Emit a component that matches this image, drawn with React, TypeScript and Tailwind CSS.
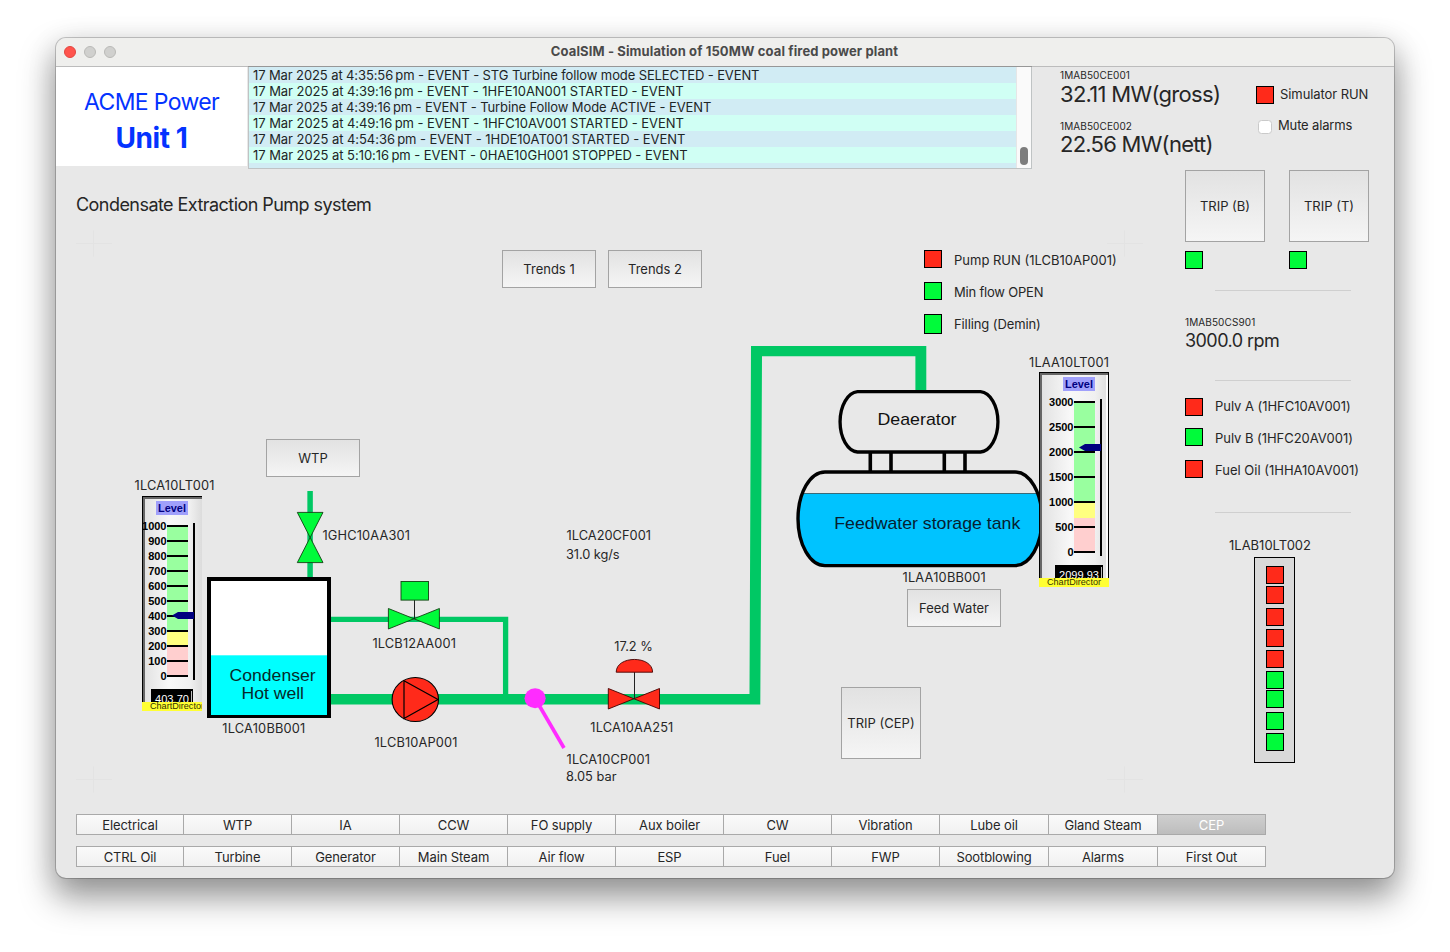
import React from "react";

const RED = "#ff2a1a";
const GREEN = "#00fb3a";
const PIPE = "#00c864";

type Align = "start" | "middle" | "end";

/** Tag or value label on the mimic, fitted to the width w. */
function Tag({ x, y, w, children }: { x: number; y: number; w: number; children: string }) {
  return (
    <text x={x} y={y} textLength={w} fontSize={12.8} fill="#262626">
      {children}
    </text>
  );
}

function Lamp({ on, className = "" }: { on: boolean; className?: string }) {
  return (
    <span
      className={`block size-[18px] shrink-0 border border-black ${on ? "bg-[#ff2a1a]" : "bg-[#00fb3a]"} ${className}`}
    />
  );
}

function PushButton({ label, className }: { label: string; className: string }) {
  return (
    <button
      className={`flex items-center justify-center border border-[#a3a3a3] bg-linear-to-b from-[#e2e2e2] to-[#f5f5f5] pt-0.5 text-[13px] text-[#262626] ${className}`}
    >
      {label}
    </button>
  );
}

function ArialText(props: {
  x: number;
  y: number;
  w?: number;
  size: number;
  bold?: boolean;
  fill?: string;
  anchor?: Align;
  children: React.ReactNode;
}) {
  return (
    <text
      x={props.x}
      y={props.y}
      fontFamily="'Liberation Sans', Arial, sans-serif"
      fontSize={props.size}
      fontWeight={props.bold ? 700 : 400}
      fill={props.fill ?? "#000"}
      textAnchor={props.anchor ?? "start"}
      textLength={props.w}
      lengthAdjust="spacingAndGlyphs"
    >
      {props.children}
    </text>
  );
}

interface GaugeProps {
  id: string;
  x: number;
  y: number;
  width: number;
  inset: number;
  ticks: number[];
  warn: number;
  low: number;
  pointer: number;
  value: string;
  valueX: number;
  valueWidth: number;
  rightEdge?: boolean;
}

function Gauge(g: GaugeProps) {
  const sx = 25 + g.inset;
  const step = 150 / (g.ticks.length - 1);
  return (
    <g transform={`translate(${g.x} ${g.y})`}>
      <defs>
        <linearGradient id={`${g.id}-bg`} x1="0" x2="1" y1="0" y2="0">
          <stop offset="0" stopColor="#e0e0e0" />
          <stop offset="0.45" stopColor="#f8f8f8" />
          <stop offset="0.8" stopColor="#f0f0f0" />
          <stop offset="1" stopColor="#dcdcdc" />
        </linearGradient>
        <clipPath id={`${g.id}-clip`}>
          <rect width={g.width} height="206" />
        </clipPath>
        <clipPath id={`${g.id}-foot`}>
          <rect y="205" width={g.width} height="11" />
        </clipPath>
      </defs>
      <g clipPath={`url(#${g.id}-clip)`}>
        <rect width={g.width} height="206" fill={`url(#${g.id}-bg)`} />
        <path d={`M0 0H${g.width}V3H3V206H0Z`} fill="#666" />
        <path d={`M0 0H${g.width}V1H1V206H0Z`} fill="#000" />
        {g.rightEdge && (
          <>
            <path d={`M${g.width - 3} 3h2v203h-2z`} fill="#fcfcfc" />
            <path d={`M${g.width - 1} 0h1v206h-1z`} fill="#000" />
          </>
        )}
        <rect x={14 + g.inset} y="5" width="32" height="14" fill="#a0a0fb" />
        <ArialText x={16 + g.inset} y={16} w={28} size={11} bold fill="#000080">
          Level
        </ArialText>
        <rect x={sx} y="30" width="21" height={g.warn - 30} fill="#99ff9f" />
        <rect x={sx} y={g.warn} width="21" height={g.low - g.warn} fill="#ffff80" />
        <rect x={sx} y={g.low} width="21" height={180 - g.low} fill="#ffcfcf" />
        {g.ticks.map((t, i) => (
          <g key={t}>
            <rect x={sx} y={29 + i * step} width="21" height="2" fill="#000" />
            <ArialText x={sx - 0.5} y={34 + i * step} size={11} bold anchor="end">
              {t}
            </ArialText>
          </g>
        ))}
        <rect x={51 + g.inset} y="27" width="2" height="157" fill="#000" />
        <path
          d={`M${30 + g.inset} ${g.pointer} l6 -3.5 H${52 + g.inset} v7 H${36 + g.inset} Z`}
          fill="#000080"
        />
        <rect x={g.valueX} y="193" width={g.valueWidth} height="14" fill="#000" />
        <path d={`M${g.valueX + g.valueWidth - 1.5} 195v12`} stroke="#bbb" />
        <ArialText x={g.valueX + 4} y={206.6} w={g.valueWidth - 8} size={11.8} fill="#fff">
          {g.value}
        </ArialText>
      </g>
      <g clipPath={`url(#${g.id}-foot)`}>
        <rect y="206" width={g.width} height="9" fill="#ffff33" />
        <ArialText x={8} y={213} w={54} size={9.5} fill="#333300">
          ChartDirector
        </ArialText>
      </g>
    </g>
  );
}

function Cross({ x, y }: { x: number; y: number }) {
  return <path d={`M${x - 17} ${y}h36M${x + 0.5} ${y - 13}v26`} stroke="#e3e3e3" />;
}

function Mimic() {
  return (
    <svg
      className="absolute inset-0"
      width="1129"
      height="631"
      viewBox="56 169 1129 631"
      fontFamily="Inter, sans-serif"
    >
      <Cross x={93} y={243.5} />
      <Cross x={1124} y={243.5} />
      <Cross x={93} y={779.5} />
      <Cross x={1124} y={779.5} />

      {/* pipework */}
      <path d="M330 694H749.5L751 346H926.3V392H915.4V356.3H762L760.3 704.6H330Z" fill={PIPE} />
      <path d="M330 619.3H505.6V696" fill="none" stroke={PIPE} strokeWidth="5.3" />
      <path d="M310.1 491V579" stroke={PIPE} strokeWidth="5.5" />

      {/* condenser hot well */}
      <rect x="209" y="579" width="120" height="137" fill="#fff" stroke="#000" strokeWidth="4" />
      <rect x="211" y="655.3" width="116" height="59.7" fill="#00ffff" />
      <ArialText x={229.6} y={680.7} w={86} size={16.2} fill="#062a2a">Condenser</ArialText>
      <ArialText x={241.5} y={699} w={62.5} size={16.2} fill="#062a2a">Hot well</ArialText>

      {/* make-up valve */}
      <path d="M297.3 512.4H323L297.3 562.6H323Z" fill={GREEN} stroke="#134013" strokeWidth="0.9" />

      {/* minimum flow valve */}
      <path d="M388.4 608.5L439.4 629V608.5L388.4 629Z" fill={GREEN} stroke="#134013" strokeWidth="0.9" />
      <path d="M414.5 600V619" stroke="#222" />
      <rect x="401" y="581.5" width="27.5" height="18.6" fill={GREEN} stroke="#134013" strokeWidth="0.9" />

      {/* extraction pump */}
      <ellipse cx="415.3" cy="699.5" rx="23.2" ry="22" fill={RED} stroke="#000" strokeWidth="1.1" />
      <path d="M404 680.8V718.5L438 699.5Z" fill="none" stroke="#000" strokeWidth="1.2" />

      {/* pressure tap */}
      <path d="M536 700L564 748" stroke="#ff2cff" strokeWidth="3.6" />
      <ellipse cx="535.1" cy="698.3" rx="10.6" ry="10" fill="#ff2cff" />

      {/* control valve */}
      <path d="M608.3 688.5L659.5 709V688.5L608.3 709Z" fill={RED} stroke="#400" strokeWidth="0.9" />
      <path d="M634.5 672V698.7" stroke="#222" />
      <path d="M616.2 672.2C616.2 655.2 652.6 655.2 652.6 672.2Z" fill={RED} stroke="#400" strokeWidth="0.9" />

      {/* feedwater tank and deaerator */}
      <clipPath id="tank">
        <path d="M825 472H1015A27 46.8 0 0 1 1015 565.6H825A27 46.8 0 0 1 825 472Z" />
      </clipPath>
      <g clipPath="url(#tank)">
        <rect x="790" y="493.5" width="260" height="80" fill="#00c3ff" />
        <path d="M790 493.5H1050" stroke="#3a6a78" />
      </g>
      <path
        d="M825 472H1015A27 46.8 0 0 1 1015 565.6H825A27 46.8 0 0 1 825 472Z"
        fill="none"
        stroke="#000"
        strokeWidth="3.4"
      />
      <path d="M870.3 452V471M891 452V471M944.3 452V471M965 452V471" stroke="#000" strokeWidth="3.6" />
      <path
        d="M857.5 391.7H980.5A18.5 30.2 0 0 1 980.5 452H857.5A18.5 30.2 0 0 1 857.5 391.7Z"
        fill="#e8e8e8"
        stroke="#000"
        strokeWidth="3.3"
      />
      <ArialText x={877.5} y={425.3} w={79} size={16.2} fill="#111">Deaerator</ArialText>
      <ArialText x={834.3} y={529.3} w={186} size={16.2} fill="#062030">Feedwater storage tank</ArialText>

      <Gauge
        id="hotwell"
        x={142}
        y={496}
        width={60}
        inset={0}
        ticks={[1000, 900, 800, 700, 600, 500, 400, 300, 200, 100, 0]}
        warn={134.5}
        low={150.5}
        pointer={119.5}
        value="403.70"
        valueX={9}
        valueWidth={42}
      />
      <Gauge
        id="tanklevel"
        x={1039}
        y={372}
        width={70}
        inset={10}
        ticks={[3000, 2500, 2000, 1500, 1000, 500, 0]}
        warn={130}
        low={146}
        pointer={75.5}
        value="2099.93"
        valueX={16}
        valueWidth={48}
        rightEdge
      />

      <Tag x={134.5} y={490} w={80}>1LCA10LT001</Tag>
      <Tag x={322.5} y={540} w={87.5}>1GHC10AA301</Tag>
      <Tag x={566.5} y={540} w={84.5}>1LCA20CF001</Tag>
      <Tag x={566} y={559} w={53.5}>31.0 kg/s</Tag>
      <Tag x={372.5} y={648} w={83.5}>1LCB12AA001</Tag>
      <Tag x={222.3} y={733} w={83}>1LCA10BB001</Tag>
      <Tag x={374.5} y={747} w={83}>1LCB10AP001</Tag>
      <Tag x={614.3} y={651} w={38.5}>17.2 %</Tag>
      <Tag x={590.3} y={732} w={83}>1LCA10AA251</Tag>
      <Tag x={566.5} y={764} w={83.5}>1LCA10CP001</Tag>
      <Tag x={566} y={781} w={50.5}>8.05 bar</Tag>
      <Tag x={1029} y={367} w={80}>1LAA10LT001</Tag>
      <Tag x={902.5} y={582} w={83.3}>1LAA10BB001</Tag>
    </svg>
  );
}

const EVENTS = [
  { text: "17 Mar 2025 at 4:35:56\u202fpm - EVENT - STG Turbine follow mode SELECTED - EVENT", tracking: "tracking-[-0.11px]" },
  { text: "17 Mar 2025 at 4:39:16\u202fpm - EVENT - 1HFE10AN001 STARTED - EVENT", tracking: "tracking-[-0.05px]" },
  { text: "17 Mar 2025 at 4:39:16\u202fpm - EVENT - Turbine Follow Mode ACTIVE - EVENT", tracking: "tracking-[-0.11px]" },
  { text: "17 Mar 2025 at 4:49:16\u202fpm - EVENT - 1HFC10AV001 STARTED - EVENT", tracking: "tracking-[-0.05px]" },
  { text: "17 Mar 2025 at 4:54:36\u202fpm - EVENT - 1HDE10AT001 STARTED - EVENT", tracking: "tracking-[-0.05px]" },
  { text: "17 Mar 2025 at 5:10:16\u202fpm - EVENT - 0HAE10GH001 STOPPED - EVENT", tracking: "tracking-[-0.04px]" },
  { text: "", tracking: "" },
];

const TABS_TOP = ["Electrical", "WTP", "IA", "CCW", "FO supply", "Aux boiler", "CW", "Vibration", "Lube oil", "Gland Steam", "CEP"];
const TABS_BOTTOM = ["CTRL Oil", "Turbine", "Generator", "Main Steam", "Air flow", "ESP", "Fuel", "FWP", "Sootblowing", "Alarms", "First Out"];

function TabRow({ tabs, active }: { tabs: string[]; active?: string }) {
  return (
    <div className="grid h-[21px] w-[1190px] grid-cols-[107px_repeat(7,108px)_109px_109px_1fr] divide-x divide-[#a9a9a9] border border-[#a9a9a9]">
      {tabs.map((t) => (
        <button
          key={t}
          className={`flex items-center justify-center pt-px text-[13px] leading-none tracking-[-0.1px] ${
            t === active
              ? "bg-linear-to-b from-[#cfcfcf] to-[#bdbdbd] text-white"
              : "bg-linear-to-b from-[#fafafa] to-[#f1f1f1] text-[#262626]"
          }`}
        >
          {t}
        </button>
      ))}
    </div>
  );
}

function EventLog() {
  return (
    <div className="flex h-[102px] w-[784px] overflow-hidden border-x border-b border-[#bfc3c4] shadow-[0_-1px_0_#979797]">
      <div className="flex-1 overflow-hidden">
        {EVENTS.map((e, i) => (
          <div
            key={i}
            className={`h-4 whitespace-nowrap pl-1 text-[13px] leading-[17px] text-[#1d2526] odd:bg-[#d1ecf4] even:bg-[#d0fff4] ${e.tracking}`}
          >
            {e.text}
          </div>
        ))}
      </div>
      <div className="flex w-[15px] flex-col justify-end border-l border-[#e6e6e6] bg-[#fafafa] pb-[3px] pl-[3px]">
        <div className="h-[18px] w-2 rounded-full bg-[#7d7d7d]" />
      </div>
    </div>
  );
}

function Header() {
  return (
    <header className="flex h-[102px] shrink-0">
      <div className="mr-px flex h-[99px] w-[191px] flex-col items-center bg-white pt-[20px] text-[#0433ff]">
        <div className="text-[23px] leading-[30px] tracking-[-0.65px]">ACME Power</div>
        <div className="mt-[3px] text-[28px] font-bold leading-[36px] tracking-[-0.4px]">Unit 1</div>
      </div>
      <EventLog />
      <div className="w-[196px] whitespace-nowrap pl-[28px] text-[#262626]">
        <div className="pt-px text-[10px] leading-[14px] tracking-[0.1px]">1MAB50CE001</div>
        <div className="text-[22px] leading-[25px] tracking-[-0.7px]">32.11 MW(gross)</div>
        <div className="pt-[12px] text-[10px] leading-[14px] tracking-[0.1px]">1MAB50CE002</div>
        <div className="text-[22px] leading-[22px] tracking-[-0.75px]">22.56 MW(nett)</div>
      </div>
      <div className="whitespace-nowrap pt-[19px] text-[13px] tracking-[-0.08px] text-[#262626]">
        <div className="ml-[28px] flex gap-[6px] leading-[16px]">
          <Lamp on />
          <span>Simulator RUN</span>
        </div>
        <label className="ml-[30px] mt-[14px] flex h-[18px] items-center gap-[6px] tracking-[-0.15px]">
          <span className="size-[14px] rounded-[3.5px] border border-[#cacaca] bg-white" />
          <span className="pb-0.5">Mute alarms</span>
        </label>
      </div>
    </header>
  );
}

const LEVEL_LAMPS = [
  { on: true, gap: "mt-0" },
  { on: true, gap: "mt-[2px]" },
  { on: true, gap: "mt-[4px]" },
  { on: true, gap: "mt-[3px]" },
  { on: true, gap: "mt-[3px]" },
  { on: false, gap: "mt-[3px]" },
  { on: false, gap: "mt-[1px]" },
  { on: false, gap: "mt-[4px]" },
  { on: false, gap: "mt-[3px]" },
];

function SidePanel() {
  return (
    <aside className="flex w-[184px] flex-col pt-px text-[13px] text-[#262626]">
      <div className="grid grid-cols-2 gap-[24px]">
        <div>
          <PushButton label="TRIP (B)" className="h-[72px] w-20" />
          <Lamp on={false} className="mt-[9px]" />
        </div>
        <div>
          <PushButton label="TRIP (T)" className="h-[72px] w-20" />
          <Lamp on={false} className="mt-[9px]" />
        </div>
      </div>
      <hr className="ml-[30px] mt-[21px] w-[136px] border-[#cfcfcf]" />
      <div className="mt-[24px] text-[10px] leading-[14px] tracking-[0.1px]">1MAB50CS901</div>
      <div className="mt-px text-[18px] leading-[22px] tracking-[-0.55px]">3000.0 rpm</div>
      <hr className="ml-[30px] mt-[28px] w-[136px] border-[#cfcfcf]" />
      <div className="mt-[17px] flex h-[18px] gap-3 whitespace-nowrap leading-[16px] tracking-[-0.04px]">
        <Lamp on />
        <span>Pulv A (1HFC10AV001)</span>
      </div>
      <div className="mt-[12px] flex h-[18px] gap-3 whitespace-nowrap leading-[20px] tracking-[-0.04px]">
        <Lamp on={false} />
        <span>Pulv B (1HFC20AV001)</span>
      </div>
      <div className="mt-[14px] flex h-[18px] gap-3 whitespace-nowrap leading-[20px]">
        <Lamp on />
        <span>Fuel Oil (1HHA10AV001)</span>
      </div>
      <hr className="ml-[30px] mt-[34px] w-[136px] border-[#cfcfcf]" />
      <div className="mt-[22px] w-[170px] text-center leading-5">1LAB10LT002</div>
      <div className="ml-[69px] mt-[2px] flex h-[206px] w-[41px] flex-col items-center border border-black bg-[#d9d9d9] pt-2">
        {LEVEL_LAMPS.map((l, i) => (
          <Lamp key={i} on={l.on} className={l.gap} />
        ))}
      </div>
    </aside>
  );
}

export default function App() {
  return (
    <div className="h-[952px] w-[1450px] overflow-hidden bg-white pl-[56px] pt-[38px] font-[Inter,sans-serif]">
      <div className="flex h-[840px] w-[1338px] flex-col overflow-hidden rounded-[10px] bg-[#e8e8e8] shadow-[0_0_0_1px_rgba(0,0,0,0.2),0_18px_34px_2px_rgba(0,0,0,0.38),0_6px_30px_rgba(0,0,0,0.12)]">
        <div className="flex h-[29px] shrink-0 items-center border-b border-[#bcbcbc] bg-[#efefed] pl-2">
          <div className="flex w-[52px] gap-2">
            <span className="size-3 rounded-full border border-[#e2463f] bg-[#ff544d]" />
            <span className="size-3 rounded-full border border-[#b9b9b7] bg-[#d0d0ce]" />
            <span className="size-3 rounded-full border border-[#b9b9b7] bg-[#d0d0ce]" />
          </div>
          <div className="flex-1 pr-[61px] text-center text-[13px] font-bold tracking-[0.12px] text-[#4a4a4a]">
            CoalSIM - Simulation of 150MW coal fired power plant
          </div>
        </div>

        <Header />

        <div className="flex h-[645px] shrink-0">
          <main className="relative w-[1129px]">
            <h1 className="pl-[20px] pt-[24px] text-[18px] leading-[24px] tracking-[-0.55px] text-[#262626]">
              Condensate Extraction Pump system
            </h1>
            <Mimic />
            <PushButton label="Trends 1" className="absolute left-[446px] top-[81px] h-[38px] w-[94px]" />
            <PushButton label="Trends 2" className="absolute left-[552px] top-[81px] h-[38px] w-[94px]" />
            <PushButton label="WTP" className="absolute left-[210px] top-[270px] h-[38px] w-[94px]" />
            <PushButton label="Feed Water" className="absolute left-[851px] top-[420px] h-[38px] w-[94px]" />
            <PushButton label="TRIP (CEP)" className="absolute left-[785px] top-[518px] h-[72px] w-20" />
            <div className="absolute left-[868px] top-[81px] flex flex-col gap-[14px] whitespace-nowrap text-[13px] leading-[21px] text-[#262626]">
              <div className="flex h-[18px] gap-3">
                <Lamp on />
                <span>Pump RUN (1LCB10AP001)</span>
              </div>
              <div className="flex h-[18px] gap-3 tracking-[-0.2px]">
                <Lamp on={false} />
                <span>Min flow OPEN</span>
              </div>
              <div className="flex h-5 gap-3 tracking-[-0.1px]">
                <Lamp on={false} className="h-5" />
                <span>Filling (Demin)</span>
              </div>
            </div>
          </main>
          <SidePanel />
        </div>

        <nav className="flex flex-col gap-[11px] pl-5">
          <TabRow tabs={TABS_TOP} active="CEP" />
          <TabRow tabs={TABS_BOTTOM} />
        </nav>
      </div>
    </div>
  );
}
